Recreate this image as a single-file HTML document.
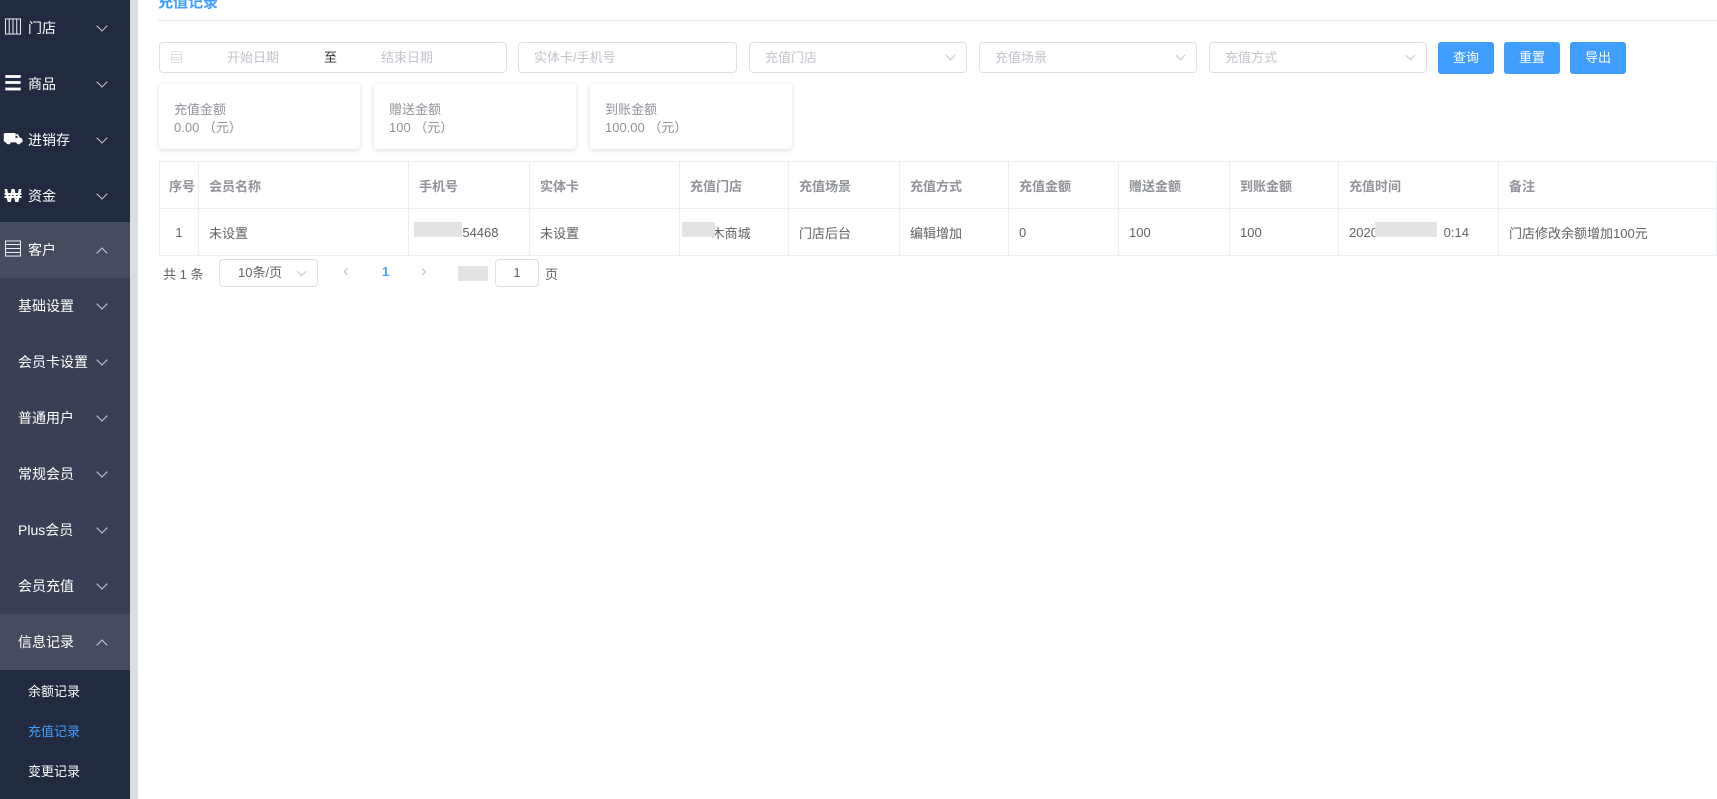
<!DOCTYPE html>
<html><head><meta charset="utf-8">
<style>
*{margin:0;padding:0;box-sizing:border-box}
body{width:1717px;height:799px;overflow:hidden;background:#fff;font-family:"Liberation Sans","Noto Sans CJK SC",sans-serif;position:relative;color:#606266}
.side{position:absolute;left:0;top:0;width:130px;height:799px;background:#222a40}
.strip{position:absolute;left:130px;top:0;width:8px;height:799px;background:#dcdde0}
.it{position:absolute;left:0;width:130px;height:56px;color:#fff;font-size:14px;line-height:56px}
.it .ic{position:absolute;left:2px;top:0;width:22px;text-align:center;font-size:18px;font-weight:bold}
.it .t{position:absolute;left:28px}
.it .t2{position:absolute;left:18px}
.it .ar{position:absolute;left:98px;top:22px;width:8px;height:8px;border-right:1.5px solid #cfd2da;border-bottom:1.5px solid #cfd2da;transform:rotate(45deg)}
.it .up{top:27px;transform:rotate(-135deg)}
.sub{background:#394055}
.hl{background:#464c5f}
.leaf{position:absolute;left:28px;font-size:13px;color:#fff}
.abs{position:absolute}
.inp{position:absolute;top:42px;height:31px;border:1px solid #dcdfe6;border-radius:4px;font-size:13px;color:#c0c4cc;line-height:29px}
.sel .ch{position:absolute;right:12px;top:9px;width:7px;height:7px;border-right:1px solid #c0c4cc;border-bottom:1px solid #c0c4cc;transform:rotate(45deg)}
.btn{position:absolute;top:42px;height:32px;width:56px;background:#409eff;color:#fff;border-radius:3px;font-size:13px;text-align:center;line-height:32px}
.card{position:absolute;top:84px;height:65px;background:#fff;box-shadow:0 1px 5px rgba(0,0,0,.15);border-radius:3px;font-size:13px;color:#909399;padding:17px 0 0 15px;line-height:18px}
table{position:absolute;left:159px;top:161px;width:1558px;border-collapse:collapse;font-size:13px;table-layout:fixed}
td{border:1px solid #ebeef5;padding:0 10px;height:47px;color:#606266;white-space:nowrap;overflow:hidden}
tr.h td{font-weight:bold;color:#909399;height:47px}
.blur{position:absolute;background:#e3e3e3}
</style></head><body>
<div class="side">
<div class="it" style="top:0"><span class="ic" style="font-size:20px">▥</span><span class="t">门店</span><span class="ar"></span></div>
<div class="it" style="top:56px"><span class="ic" style="font-size:20px">☰</span><span class="t">商品</span><span class="ar"></span></div>
<div class="it" style="top:112px"><span class="ic" style="font-size:16px">⛟</span><span class="t">进销存</span><span class="ar"></span></div>
<div class="it" style="top:168px"><span class="ic">₩</span><span class="t">资金</span><span class="ar"></span></div>
<div class="it hl" style="top:222px"><span class="ic" style="font-size:20px">▤</span><span class="t">客户</span><span class="ar up"></span></div>
<div class="it sub" style="top:278px"><span class="t2">基础设置</span><span class="ar"></span></div>
<div class="it sub" style="top:334px"><span class="t2">会员卡设置</span><span class="ar"></span></div>
<div class="it sub" style="top:390px"><span class="t2">普通用户</span><span class="ar"></span></div>
<div class="it sub" style="top:446px"><span class="t2">常规会员</span><span class="ar"></span></div>
<div class="it sub" style="top:502px"><span class="t2">Plus会员</span><span class="ar"></span></div>
<div class="it sub" style="top:558px"><span class="t2">会员充值</span><span class="ar"></span></div>
<div class="it hl" style="top:614px"><span class="t2">信息记录</span><span class="ar up"></span></div>
<div class="leaf" style="top:681px">余额记录</div>
<div class="leaf" style="top:721px;color:#409eff">充值记录</div>
<div class="leaf" style="top:761px">变更记录</div>
</div>
<div class="strip"></div>
<div class="abs" style="left:158px;top:-9px;font-size:15px;font-weight:bold;color:#409eff">充值记录</div>
<div class="abs" style="left:158px;top:20px;width:1559px;height:1px;background:#e4e7ed"></div>
<div class="inp" style="left:159px;width:348px"><span class="abs" style="left:10px;top:0">▤</span><span class="abs" style="left:67px">开始日期</span><span class="abs" style="left:164px;color:#303133">至</span><span class="abs" style="left:221px">结束日期</span></div>
<div class="inp" style="left:518px;width:219px;padding-left:15px">实体卡/手机号</div>
<div class="inp sel" style="left:749px;width:218px;padding-left:15px">充值门店<span class="ch"></span></div>
<div class="inp sel" style="left:979px;width:218px;padding-left:15px">充值场景<span class="ch"></span></div>
<div class="inp sel" style="left:1209px;width:218px;padding-left:15px">充值方式<span class="ch"></span></div>
<div class="btn" style="left:1438px">查询</div>
<div class="btn" style="left:1504px">重置</div>
<div class="btn" style="left:1570px">导出</div>
<div class="card" style="left:159px;width:201px">充值金额<br>0.00 （元）</div>
<div class="card" style="left:374px;width:202px">赠送金额<br>100 （元）</div>
<div class="card" style="left:590px;width:202px">到账金额<br>100.00 （元）</div>
<table>
<colgroup><col style="width:39px"><col style="width:210px"><col style="width:121px"><col style="width:150px"><col style="width:109px"><col style="width:111px"><col style="width:109px"><col style="width:110px"><col style="width:111px"><col style="width:109px"><col style="width:160px"><col></colgroup>
<tr class="h"><td style="padding:0 0 0 9px">序号</td><td>会员名称</td><td>手机号</td><td>实体卡</td><td>充值门店</td><td>充值场景</td><td>充值方式</td><td>充值金额</td><td>赠送金额</td><td>到账金额</td><td>充值时间</td><td>备注</td></tr>
<tr><td style="text-align:center;padding:0">1</td><td>未设置</td><td style="padding-left:10px">&nbsp;&nbsp;&nbsp;&nbsp;&nbsp;&nbsp;&nbsp;&nbsp;&nbsp;&nbsp;454468</td><td>未设置</td><td>&nbsp;&nbsp;&nbsp;&nbsp;&nbsp;&nbsp;木商城</td><td>门店后台</td><td>编辑增加</td><td>0</td><td>100</td><td>100</td><td>2020-&nbsp;&nbsp;&nbsp;&nbsp;&nbsp;&nbsp;&nbsp;&nbsp;&nbsp;&nbsp;&nbsp;&nbsp;&nbsp;&nbsp;&nbsp;&nbsp;&nbsp;0:14</td><td>门店修改余额增加100元</td></tr>
</table>
<div class="blur" style="left:414px;top:222px;width:48px;height:15px"></div>
<div class="blur" style="left:682px;top:222px;width:33px;height:15px"></div>
<div class="blur" style="left:1375px;top:222px;width:62px;height:15px"></div>
<div class="abs" style="left:163px;top:264px;font-size:13px">共 1 条</div>
<div class="inp sel" style="left:219px;top:259px;width:99px;height:28px;line-height:26px;color:#606266;padding-left:18px">10条/页<span class="ch" style="top:8px"></span></div>
<div class="abs" style="left:343px;top:261px;font-size:17px;color:#c0c4cc">‹</div>
<div class="abs" style="left:382px;top:264px;font-size:13px;font-weight:bold;color:#409eff">1</div>
<div class="abs" style="left:421px;top:261px;font-size:17px;color:#c0c4cc">›</div>
<div class="blur" style="left:458px;top:266px;width:30px;height:15px"></div>
<div class="inp" style="left:495px;top:259px;width:44px;height:28px;line-height:26px;color:#606266;text-align:center">1</div>
<div class="abs" style="left:545px;top:264px;font-size:13px">页</div>
</body></html>
